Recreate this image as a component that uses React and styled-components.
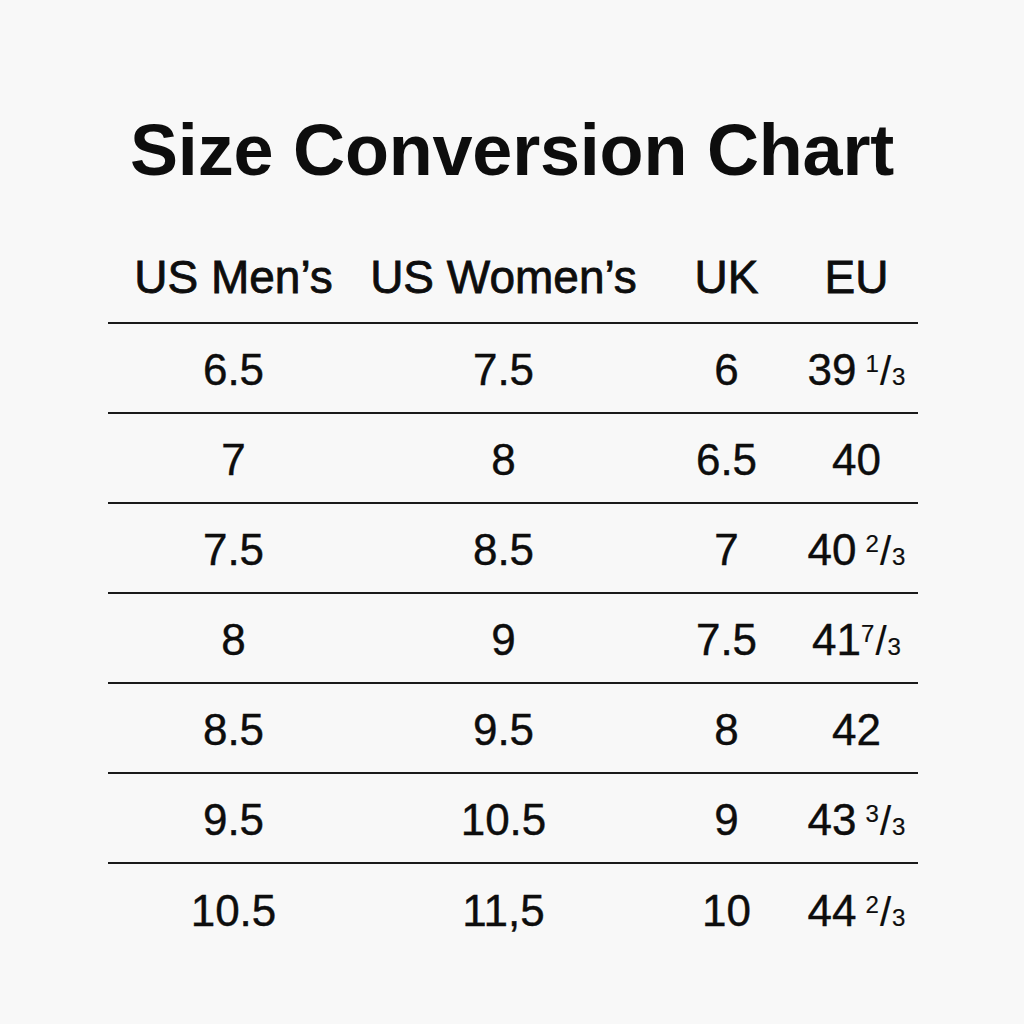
import React from 'react';
import styled, {createGlobalStyle} from 'styled-components';

const GlobalStyle = createGlobalStyle`
  html, body {
    margin: 0;
    padding: 0;
    background: #f8f8f8;
  }
  body {
    font-family: "Liberation Sans", Arial, sans-serif;
    color: #0d0d0d;
  }
`;

const Page = styled.div`
  width: 1024px;
  height: 1024px;
  box-sizing: border-box;
  padding-top: 114px;
  display: flex;
  flex-direction: column;
  align-items: center;
`;

const Title = styled.h1`
  margin: 0 0 46px;
  font-size: 72px;
  line-height: 72px;
  font-weight: 700;
  letter-spacing: -0.2px;
  text-align: center;
`;

const Table = styled.div`
  width: 810px;
  margin-left: 1px;
  display: flex;
  flex-direction: column;
`;

const Row = styled.div`
  display: grid;
  grid-template-columns: 252px 288px 158px 112px;
  align-items: center;
  box-sizing: border-box;
  height: ${(p) => (p.$header ? '92px' : '90px')};
  border-bottom: ${(p) => (p.$last ? 'none' : '2px solid #1a1a1a')};
`;

const Cell = styled.div`
  text-align: center;
  white-space: nowrap;
  font-size: ${(p) => (p.$header ? '46px' : '44px')};
  line-height: 46px;
  -webkit-text-stroke: ${(p) => (p.$header ? '0.8px #0d0d0d' : '0.4px #0d0d0d')};
  padding-right: ${(p) => (p.$eu ? '10px' : '0')};
  padding-top: ${(p) => (p.$header ? '0' : '4px')};
`;

const Frac = styled.span`
  margin-left: ${(p) => (p.$tight ? '0' : '9px')};
  -webkit-text-stroke: 0.2px #0d0d0d;
`;

const Num = styled.span`
  font-size: 24px;
  vertical-align: 13px;
`;

const Slash = styled.span`
  font-size: 40px;
  margin: 0 1px;
`;

const Den = styled.span`
  font-size: 24px;
`;

const rows = [
  ['6.5', '7.5', '6', '39', '1'],
  ['7', '8', '6.5', '40'],
  ['7.5', '8.5', '7', '40', '2'],
  ['8', '9', '7.5', '41', '7', true],
  ['8.5', '9.5', '8', '42'],
  ['9.5', '10.5', '9', '43', '3'],
  ['10.5', '11,5', '10', '44', '2'],
];

function Eu({whole, num, tight}) {
  return (
    <>
      {whole}
      {num && (
        <Frac $tight={tight}>
          <Num>{num}</Num>
          <Slash>/</Slash>
          <Den>3</Den>
        </Frac>
      )}
    </>
  );
}

export default function App() {
  return (
    <Page>
      <GlobalStyle />
      <Title>Size Conversion Chart</Title>
      <Table>
        <Row $header>
          <Cell $header>US Men’s</Cell>
          <Cell $header>US Women’s</Cell>
          <Cell $header>UK</Cell>
          <Cell $header $eu>EU</Cell>
        </Row>
        {rows.map(([men, women, uk, eu, num, tight], i) => (
          <Row key={i} $last={i === rows.length - 1}>
            <Cell>{men}</Cell>
            <Cell>{women}</Cell>
            <Cell>{uk}</Cell>
            <Cell $eu>
              <Eu whole={eu} num={num} tight={tight} />
            </Cell>
          </Row>
        ))}
      </Table>
    </Page>
  );
}
